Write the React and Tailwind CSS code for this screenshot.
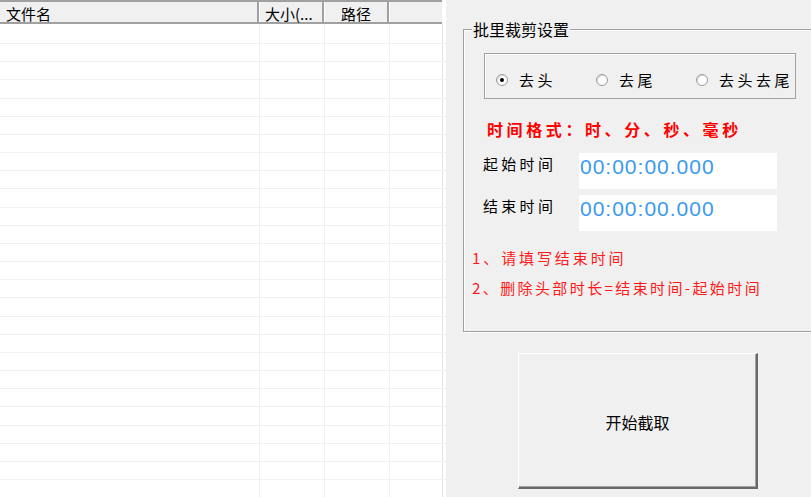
import React from "react";

const CJK = { fontFamily: '"Noto Sans CJK SC", "Liberation Sans", sans-serif' };
const NUM = { fontFamily: '"Liberation Sans", Arial, sans-serif' };

function Radio({ checked, label }) {
  return (
    <div className="w-[100px] flex items-center gap-[11px] shrink-0">
      <div className="w-[12px] h-[12px] rounded-full border border-[#9a9a9a] bg-white flex items-center justify-center shadow-[inset_1px_1px_0_#d8d8d8]">
        {checked && <div className="w-[4px] h-[4px] rounded-full bg-black" />}
      </div>
      <span className="text-[15px] leading-[15px] tracking-[3.5px] text-black whitespace-nowrap">{label}</span>
    </div>
  );
}

function TimeRow({ label, mt }) {
  return (
    <div className={`flex items-start h-[36px] ${mt}`}>
      <div className="w-[96px] ml-[19px] mt-[1px] text-[15px] leading-[20px] tracking-[3.3px] text-black whitespace-nowrap">
        {label}
      </div>
      <div className="w-[198px] h-[36px] bg-white pl-[1px] pt-[3px]">
        <span style={NUM} className="block text-[21px] leading-[21px] tracking-[1px] text-[#3b9af0] whitespace-nowrap">00:00:00.000</span>
      </div>
    </div>
  );
}

export default function App() {
  const rows = Array.from({ length: 27 }, (_, i) => i);
  return (
    <div style={CJK} className="w-[811px] h-[497px] flex overflow-hidden bg-[#f0f0f0] text-black">
      {/* left list */}
      <div className="w-[446px] h-full bg-white flex flex-col shrink-0 overflow-hidden">
        <div className="w-[442px] h-[24px] flex border-t-2 border-b-2 border-[#a0a0a0] bg-[#f0f0f0] shrink-0">
          <div className="w-[259px] h-full border-r-2 border-[#a0a0a0] pl-[6px] pt-[3px] text-[15px] leading-[18px] whitespace-nowrap">文件名</div>
          <div className="w-[65px] h-full border-l border-white border-r-2 border-r-[#a0a0a0] pl-[5px] pt-[3px] text-[15px] leading-[18px] whitespace-nowrap">大小(...</div>
          <div className="w-[65px] h-full border-l border-white border-r-2 border-r-[#a0a0a0] pt-[3px] text-center text-[15px] leading-[18px] whitespace-nowrap">路径</div>
          <div className="flex-1 h-full border-l border-white" />
        </div>
        <div className="flex flex-col">
          {rows.map((i) => (
            <div key={i} className={`flex shrink-0 border-b border-[#f0f0f0] ${i === 0 ? "h-[20px]" : "h-[18.18px]"}`}>
              <div className="w-[260px] h-full border-r border-[#f0f0f0]" />
              <div className="w-[65px] h-full border-r border-[#f0f0f0]" />
              <div className="w-[65px] h-full border-r border-[#f0f0f0]" />
              <div className="w-[53px] h-full border-r border-[#e4e4e4]" />
            </div>
          ))}
        </div>
      </div>

      {/* right panel */}
      <div className="w-[365px] shrink-0 h-full overflow-hidden flex flex-col">
        <div className="relative ml-[17px] mt-[29px] w-[400px] h-[303px] border border-[#a0a0a0] shadow-[inset_1px_1px_0_#ffffff,1px_1px_0_#ffffff] shrink-0">
          <div className="absolute -top-[11px] left-[8px] bg-[#f0f0f0] px-[1px] text-[16px] leading-[20px] whitespace-nowrap">批里裁剪设置</div>
          <div className="ml-[20px] mt-[23px] w-[312px] h-[46px] border border-[#a0a0a0] shadow-[inset_1px_1px_0_#ffffff] flex items-start pl-[11px] pt-[18px]">
            <Radio checked label="去头" />
            <Radio label="去尾" />
            <Radio label="去头去尾" />
          </div>
          <div className="ml-[23px] mt-[20px] h-[20px] text-[16px] leading-[20px] font-bold tracking-[3.6px] text-[#ff0000] whitespace-nowrap">
            时间格式：时、分、秒、毫秒
          </div>
          <TimeRow label="起始时间" mt="mt-[14px]" />
          <TimeRow label="结束时间" mt="mt-[6px]" />
          <div className="ml-[8px] mt-[17px] h-[20px] text-[15px] leading-[20px] tracking-[2.9px] text-[#ff1a1a] whitespace-nowrap">
            1、请填写结束时间
          </div>
          <div className="ml-[8px] mt-[10px] h-[20px] text-[15px] leading-[20px] tracking-[2.4px] text-[#ff1a1a] whitespace-nowrap">
            2、删除头部时长=结束时间-起始时间
          </div>
        </div>
        <div className="ml-[72px] mt-[21px] w-[240px] h-[136px] shrink-0 bg-[#f0f0f0] border-t border-l border-white border-r-2 border-b-2 border-r-[#696969] border-b-[#696969] shadow-[inset_-1px_-1px_0_#a0a0a0] flex items-center justify-center">
          <span className="text-[16px] leading-[20px] mt-[3px]">开始截取</span>
        </div>
      </div>
    </div>
  );
}
